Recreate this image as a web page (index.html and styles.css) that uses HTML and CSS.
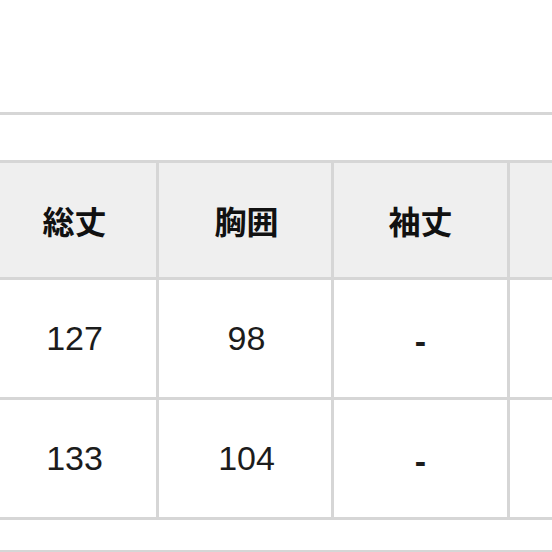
FILE: index.html
```html
<!DOCTYPE html>
<html lang="ja">
<head>
<meta charset="utf-8">
<link rel="stylesheet" href="styles.css">
</head>
<body>
<div class="top"></div>
<div class="size-table">
  <div class="cell head">総丈</div>
  <div class="cell head">胸囲</div>
  <div class="cell head">袖丈</div>
  <div class="cell head"></div>
  <div class="cell">127</div>
  <div class="cell">98</div>
  <div class="cell dash">-</div>
  <div class="cell"></div>
  <div class="cell">133</div>
  <div class="cell">104</div>
  <div class="cell dash">-</div>
  <div class="cell"></div>
</div>
<div class="next"></div>
</body>
</html>
```
FILE: styles.css
```css
html, body {
  margin: 0;
  padding: 0;
  background: #ffffff;
  overflow: hidden;
}
body {
  width: 552px;
  height: 552px;
  font-family: "Liberation Sans", "Noto Sans CJK JP", sans-serif;
}
.top {
  height: 115px;
  box-sizing: border-box;
  border-bottom: 3px solid #d6d6d6;
}
.size-table {
  margin-top: 45px;
  margin-left: -11px;
  display: grid;
  grid-template-columns: 170px 175px 176px 42px;
  grid-template-rows: 117px 120px 120px;
  border-top: 3px solid #d6d6d6;
}
.cell {
  box-sizing: border-box;
  border-right: 3px solid #d6d6d6;
  border-bottom: 3px solid #d6d6d6;
  display: flex;
  align-items: center;
  justify-content: center;
  font-size: 34px;
  color: #1c1c1c;
}
.cell:nth-child(4n+1) {
  padding-left: 4px;
}
.cell:nth-child(4n+2) {
  padding-left: 3px;
}
.cell:nth-child(4n) {
  border-right: none;
}
.head {
  background: #efefef;
  font-family: "Noto Sans CJK JP", sans-serif;
  font-weight: 700;
  font-size: 32px;
  color: #111111;
}
.dash {
  padding-top: 5px;
  font-weight: 700;
}
.next {
  margin-top: 30px;
  border-top: 3px solid #d6d6d6;
}
```
